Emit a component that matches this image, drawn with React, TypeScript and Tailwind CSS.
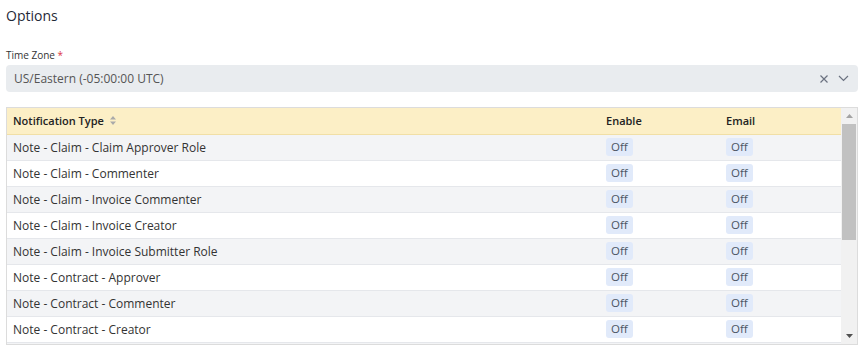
import React from "react";

const rows = [
  "Note - Claim - Claim Approver Role",
  "Note - Claim - Commenter",
  "Note - Claim - Invoice Commenter",
  "Note - Claim - Invoice Creator",
  "Note - Claim - Invoice Submitter Role",
  "Note - Contract - Approver",
  "Note - Contract - Commenter",
  "Note - Contract - Creator",
  "Note - Contract - Submitter Role",
  "Note - Invoice - Approver",
  "Note - Invoice - Commenter",
  "Note - Invoice - Creator",
  "Note - Invoice - Submitter Role",
  "Note - Project - Commenter",
  "Note - Project - Creator",
];

function Off() {
  return (
    <span className="inline-flex h-[18px] items-center rounded-[3px] bg-[#e1eafa] px-[5px] text-[11.5px] text-[#4b5563]">
      Off
    </span>
  );
}

export default function App() {
  return (
    <div className="w-[864px] h-[354px] bg-white px-[6px] pt-[5px] font-['Open_Sans',sans-serif] text-[#333]">
      <h2 className="text-[14px] leading-[22px] text-[#1f2937]">Options</h2>
      <div className="mt-[21px] text-[10px] leading-[14px] text-[#333]">
        Time Zone <span className="text-[#dc3545]">*</span>
      </div>
      <div className="mt-[3px] flex h-[27px] items-center rounded-[4px] bg-[#e9ecef] pl-[8px] pr-[9px] text-[12px] text-[#555]">
        <span className="flex-1">US/Eastern (-05:00:00 UTC)</span>
        <svg width="10" height="10" viewBox="0 0 10 10" className="mr-[9px]">
          <path d="M1.5 1.5 L8.5 8.5 M8.5 1.5 L1.5 8.5" stroke="#6b7280" strokeWidth="1.2" />
        </svg>
        <svg width="11" height="7" viewBox="0 0 11 7">
          <path d="M1 1 L5.5 5.5 L10 1" stroke="#6b7280" strokeWidth="1.2" fill="none" />
        </svg>
      </div>
      <div className="mt-[15px] flex h-[238px] border border-[#dcdcdc]">
        <div className="flex-1 overflow-hidden">
          <table className="w-full border-collapse text-[12px]">
            <thead>
              <tr className="h-[26px] bg-[#fcefc6] border-b border-[#f1dfa6] text-[11px] font-semibold text-[#222]">
                <th className="pl-[6px] text-left font-semibold">
                  <span className="inline-flex items-center">
                    Notification Type
                    <svg width="6" height="9" viewBox="0 0 6 9" className="ml-[6px]">
                      <path d="M3 0 L6 3.5 H0 Z M3 9 L0 5.5 H6 Z" fill="#aaa" />
                    </svg>
                  </span>
                </th>
                <th className="w-[120px] pl-[7px] text-left font-semibold">Enable</th>
                <th className="w-[122px] pl-[7px] text-left font-semibold">Email</th>
              </tr>
            </thead>
            <tbody>
              {rows.map((r, i) => (
                <tr
                  key={r}
                  className={`h-[26px] border-b border-[#e5e7eb] ${i % 2 === 0 ? "bg-[#f3f4f6]" : "bg-white"}`}
                >
                  <td className="pl-[6px] pt-[2px] text-[#333]">{r}</td>
                  <td className="pl-[7px]">
                    <Off />
                  </td>
                  <td className="pl-[7px]">
                    <Off />
                  </td>
                </tr>
              ))}
            </tbody>
          </table>
        </div>
        <div className="flex w-[16px] flex-col bg-[#f1f1f1]">
          <div className="flex h-[16px] items-center justify-center">
            <svg width="7" height="4" viewBox="0 0 7 4">
              <path d="M3.5 0 L7 4 H0 Z" fill="#a3a3a3" />
            </svg>
          </div>
          <div className="mx-[1px] h-[116px] bg-[#c1c1c1]" />
          <div className="flex-1" />
          <div className="flex h-[16px] items-center justify-center">
            <svg width="7" height="4" viewBox="0 0 7 4">
              <path d="M0 0 H7 L3.5 4 Z" fill="#505050" />
            </svg>
          </div>
        </div>
      </div>
    </div>
  );
}
